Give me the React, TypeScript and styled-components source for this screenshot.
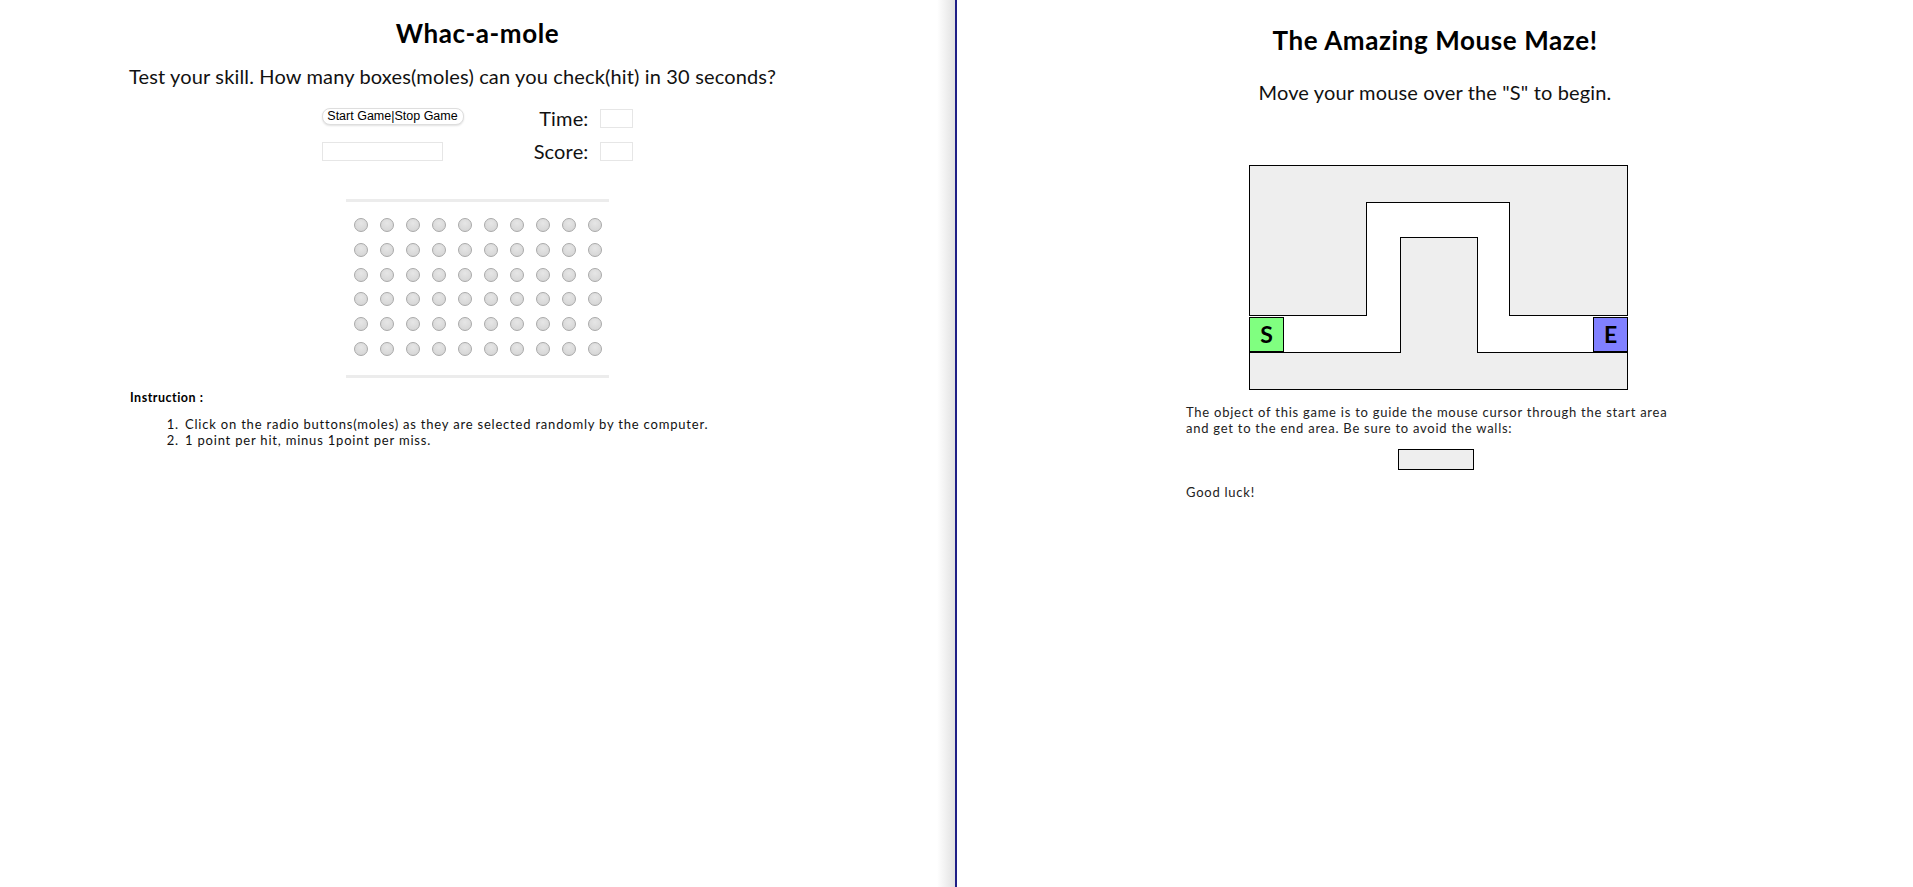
import React from 'react';
import styled, { createGlobalStyle } from 'styled-components';

const GlobalStyle = createGlobalStyle`
    html, body {
        margin: 0;
        padding: 0;
        background: #fff;
    }
    body {
        font-family: Lato, "Liberation Sans", sans-serif;
        color: #111;
    }
`;

const Split = styled.div`
    display: flex;
    width: 100%;
    height: 100vh;
    overflow: hidden;
`;

const LeftPane = styled.div`
    width: 955px;
    flex: none;
    display: flex;
    flex-direction: column;
    padding-top: 18px;
    box-sizing: border-box;
    /* sombra del borde derecho del panel */
    background: linear-gradient(to right, #fff calc(100% - 18px), #e1e1e1 100%);
`;

const Divider = styled.div`
    width: 2px;
    flex: none;
    background: #1f1f86;
`;

const RightPane = styled.div`
    flex: 1;
    display: flex;
    flex-direction: column;
    align-items: center;
    padding-top: 25px;
    background: #fff;
`;

const Title = styled.h2`
    margin: 0;
    text-align: center;
    font-size: 26px;
    line-height: 30px;
    letter-spacing: 0.6px;
    font-weight: 700;
    color: #000;
`;

const Lead = styled.p<{ $top: number; $offset?: number }>`
    margin: ${(p) => p.$top}px 0 0;
    padding-right: ${(p) => p.$offset ?? 0}px;
    text-align: center;
    font-size: 20px;
    line-height: 24px;
    letter-spacing: 0.15px;
    font-weight: 400;
    color: #111;
`;

const Controls = styled.div`
    align-self: center;
    margin-top: 19px;
    margin-left: -1px;
    display: grid;
    grid-template-columns: 142px 169px;
    grid-auto-rows: 22px;
    row-gap: 11px;
`;

const Cell = styled.div<{ $end?: boolean }>`
    display: flex;
    align-items: center;
    gap: 11px;
    justify-content: ${(p) => (p.$end ? 'flex-end' : 'flex-start')};
`;

const GameButton = styled.button`
    height: 17px;
    width: 142px;
    padding: 0;
    margin-top: -4px;
    border: 1px solid #dedede;
    border-radius: 8px;
    background: #fff;
    box-shadow: 0 1px 2px rgba(0, 0, 0, 0.12);
    font-family: "Liberation Sans", Arial, sans-serif;
    font-size: 12.5px;
    color: #000;
`;

const Field = styled.div<{ $w: number }>`
    width: ${(p) => p.$w}px;
    height: 19px;
    box-sizing: border-box;
    border: 1px solid #e6e6e6;
    background: #fff;
`;

const Label = styled.span`
    font-size: 20px;
    letter-spacing: 0.15px;
    color: #111;
`;

const Rule = styled.div<{ $top?: number }>`
    align-self: center;
    margin-top: ${(p) => p.$top ?? 0}px;
    width: 263px;
    height: 3px;
    background: #ececec;
`;

const Board = styled.div`
    align-self: center;
    margin: 11px 0 14px;
    display: grid;
    grid-template-columns: repeat(10, 14px);
    grid-auto-rows: 24.7px;
    column-gap: 12px;
    align-items: center;
`;

const Mole = styled.span`
    width: 14px;
    height: 14px;
    box-sizing: border-box;
    border-radius: 50%;
    border: 1px solid #a9a9a9;
    background: radial-gradient(circle at 50% 35%, #e6e6e6 0%, #d8d8d8 70%, #d0d0d0 100%);
`;

const Help = styled.div`
    padding-left: 130px;
    margin-top: 12px;
    font-size: 13px;
    line-height: 16px;
    letter-spacing: 0.8px;
    color: #111;
`;

const HelpTitle = styled.div`
    font-weight: 700;
    font-size: 12.5px;
    letter-spacing: 0.5px;
    color: #000;
`;

const Steps = styled.ol`
    margin: 10px 0 0;
    padding-left: 53px;
    li {
        padding-left: 2px;
    }
`;

const MazeColumn = styled.div`
    width: 500px;
    display: flex;
    flex-direction: column;
    margin-left: 2px;
`;

const MazeBox = styled.svg`
    display: block;
    align-self: center;
    margin: 61px 0 0 4px;
`;

const Story = styled.p`
    margin: 15px 0 0;
    font-size: 13px;
    line-height: 15.5px;
    letter-spacing: 0.75px;
    color: #222;
`;

const Meter = styled.div`
    align-self: center;
    margin-top: 13px;
    width: 76px;
    height: 21px;
    box-sizing: border-box;
    border: 1px solid #000;
    background: #eee;
`;

const Note = styled.p`
    margin: 14px 0 0;
    font-size: 13px;
    line-height: 16px;
    letter-spacing: 0.75px;
    color: #222;
`;

const rows = Array.from({ length: 6 });
const cols = Array.from({ length: 10 });

const Maze: React.FC = () => (
    <MazeBox width="379" height="225" viewBox="0 0 379 225" shapeRendering="crispEdges">
        <polygon
            points="0.5,0.5 378.5,0.5 378.5,150.5 260.5,150.5 260.5,37.5 117.5,37.5 117.5,150.5 0.5,150.5"
            fill="#eeeeee"
            stroke="#000"
        />
        <polygon
            points="0.5,187.5 151.5,187.5 151.5,72.5 228.5,72.5 228.5,187.5 378.5,187.5 378.5,224.5 0.5,224.5"
            fill="#eeeeee"
            stroke="#000"
        />
        <rect x="0.5" y="152.5" width="34" height="34" fill="#80ff80" stroke="#000" />
        <rect x="344.5" y="152.5" width="34" height="34" fill="#8080ff" stroke="#000" />
        <text x="17.5" y="178" textAnchor="middle" fontFamily="Lato, sans-serif" fontWeight="700" fontSize="23" fill="#000">
            S
        </text>
        <text x="361.5" y="178" textAnchor="middle" fontFamily="Lato, sans-serif" fontWeight="700" fontSize="23" fill="#000">
            E
        </text>
    </MazeBox>
);

export default function App() {
    return (
        <>
            <GlobalStyle />
            <Split>
                <LeftPane>
                    <Title>Whac-a-mole</Title>
                    <Lead $top={16} $offset={50}>
                        Test your skill. How many boxes(moles) can you check(hit) in 30 seconds?
                    </Lead>
                    <Controls>
                        <Cell>
                            <GameButton>Start Game|Stop Game</GameButton>
                        </Cell>
                        <Cell $end>
                            <Label>Time:</Label>
                            <Field $w={33} />
                        </Cell>
                        <Cell>
                            <Field $w={121} />
                        </Cell>
                        <Cell $end>
                            <Label>Score:</Label>
                            <Field $w={33} />
                        </Cell>
                    </Controls>
                    <Rule $top={37} />
                    <Board>
                        {rows.map((_, r) => cols.map((__, c) => <Mole key={`${r}-${c}`} />))}
                    </Board>
                    <Rule />
                    <Help>
                        <HelpTitle>Instruction :</HelpTitle>
                        <Steps>
                            <li>Click on the radio buttons(moles) as they are selected randomly by the computer.</li>
                            <li>1 point per hit, minus 1point per miss.</li>
                        </Steps>
                    </Help>
                </LeftPane>
                <Divider />
                <RightPane>
                    <Title>The Amazing Mouse Maze!</Title>
                    <Lead $top={25}>Move your mouse over the "S" to begin.</Lead>
                    <MazeColumn>
                        <Maze />
                        <Story>
                            The object of this game is to guide the mouse cursor through the start area
                            and get to the end area. Be sure to avoid the walls:
                        </Story>
                        <Meter />
                        <Note>Good luck!</Note>
                    </MazeColumn>
                </RightPane>
            </Split>
        </>
    );
}
